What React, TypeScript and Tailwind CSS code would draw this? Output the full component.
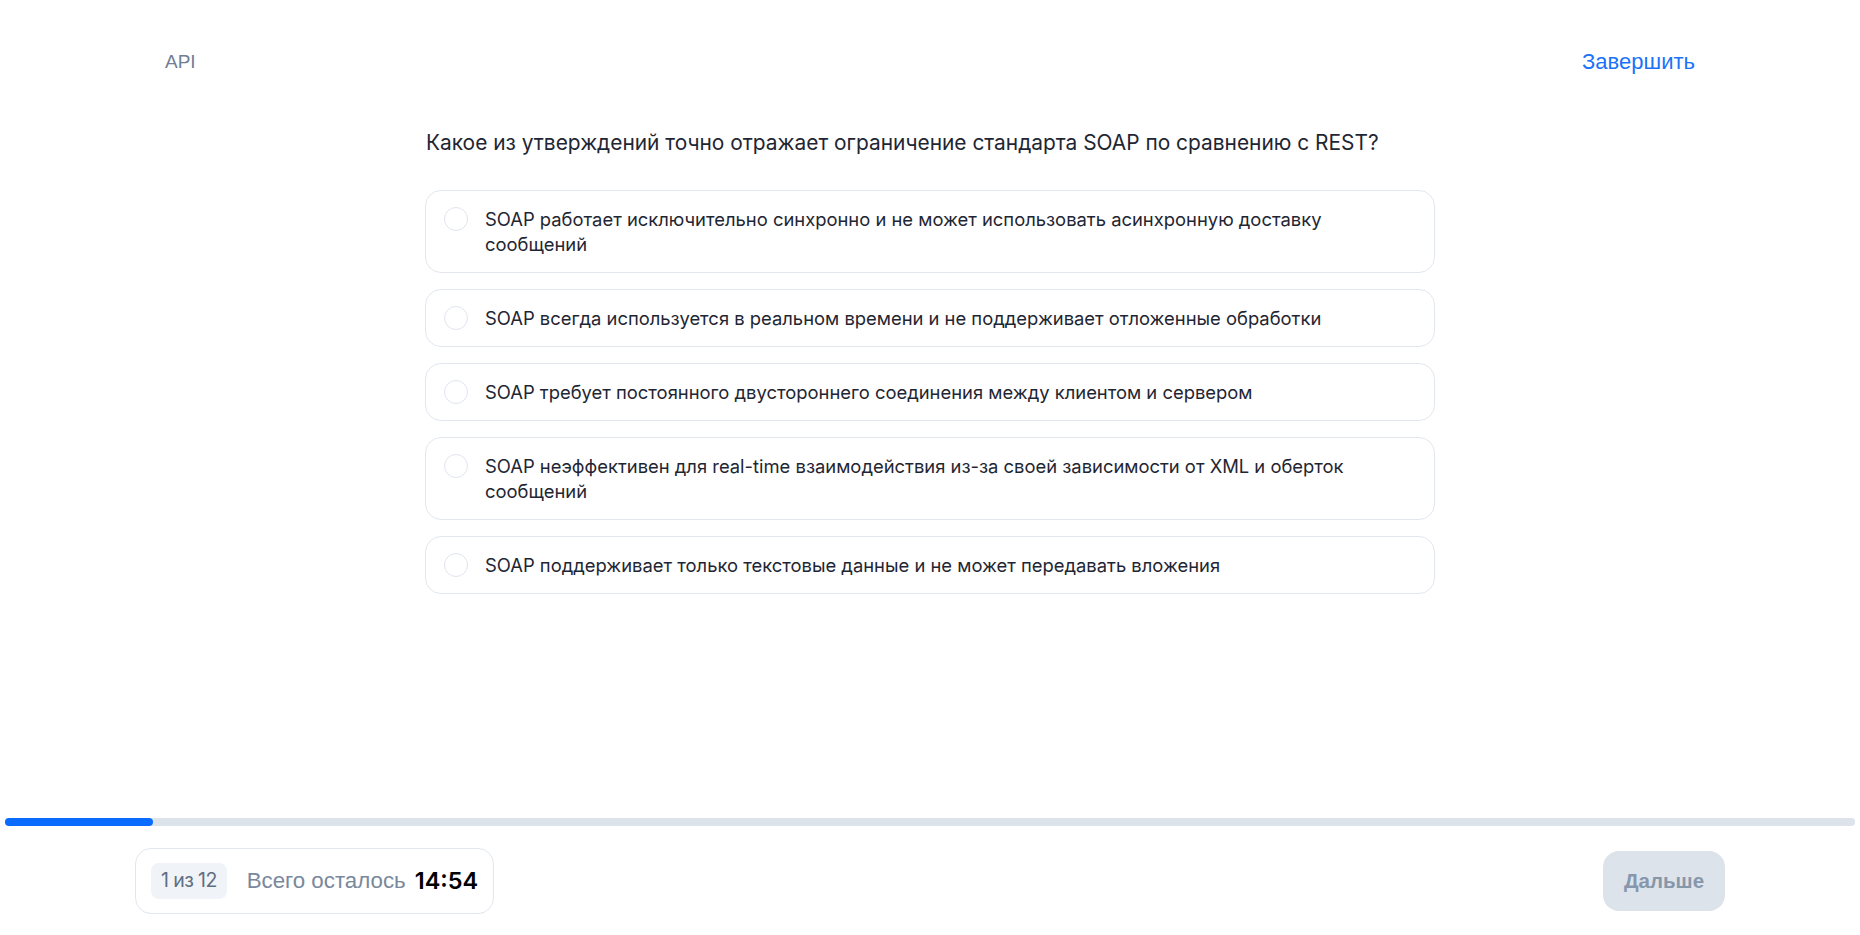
import { useState } from "react";

const OPTIONS = [
  "SOAP работает исключительно синхронно и не может использовать асинхронную доставку сообщений",
  "SOAP всегда используется в реальном времени и не поддерживает отложенные обработки",
  "SOAP требует постоянного двустороннего соединения между клиентом и сервером",
  "SOAP неэффективен для real-time взаимодействия из-за своей зависимости от XML и оберток сообщений",
  "SOAP поддерживает только текстовые данные и не может передавать вложения",
];

const sans = "font-['Inter',sans-serif]";
const arial = "font-['Liberation_Sans',Arial,sans-serif]";

export default function App() {
  const [selected, setSelected] = useState<number | null>(null);

  return (
    <div className={`h-screen flex flex-col bg-white ${sans}`}>
      <header className="flex items-center justify-between px-[165px] pt-[48px] leading-[28px]">
        <span className={`${arial} text-[19px] text-[#6f7f95]`}>API</span>
        <button className={`${arial} text-[22px] text-[#1a73f8]`}>Завершить</button>
      </header>

      <main className="flex-1 mx-auto w-[1010px] pt-[53px]">
        <h1 className="text-[20.9px] leading-[28px] text-[#1f2633] pl-[1px]">
          Какое из утверждений точно отражает ограничение стандарта SOAP по сравнению с REST?
        </h1>
        <div className="mt-[33px] flex flex-col gap-4">
          {OPTIONS.map((text, i) => (
            <button
              key={i}
              onClick={() => setSelected(i)}
              className="flex items-start gap-[17px] text-left rounded-2xl border border-[#e2e7ef] pl-[18px] pr-[44px] py-[15.5px]"
            >
              <span
                className={
                  "h-6 w-6 shrink-0 rounded-full border " +
                  (selected === i ? "border-[7px] border-[#0a6cff]" : "border-[#dfe5ee]")
                }
              />
              <span className="text-[18.4px] leading-[25px] text-[#1f2633]">{text}</span>
            </button>
          ))}
        </div>
      </main>

      <footer className="pb-[21px]">
        <div className="mx-[5px] h-2 rounded-full bg-[#dde3ea]">
          <div className="h-2 w-[148px] rounded-full bg-[#0a6cff]" />
        </div>
        <div className="mt-[22px] flex items-center justify-between px-[135px]">
          <div className="flex items-center h-[66px] rounded-2xl border border-[#e2e7ef] px-[15px]">
            <span className="rounded-lg bg-[#f0f3f7] px-[10px] h-9 flex items-center text-[19.5px] text-[#5f6e82] tracking-[-0.6px]">
              1 из 12
            </span>
            <span className={`${arial} ml-[20px] text-[22.3px] text-[#7a889c]`}>Всего осталось</span>
            <span className="ml-[9px] text-[23.5px] font-semibold text-black">14:54</span>
          </div>
          <button className={`${arial} h-[60px] w-[122px] rounded-2xl bg-[#dde3ea] text-[20.5px] font-bold text-[#8797ab]`}>
            Дальше
          </button>
        </div>
      </footer>
    </div>
  );
}
